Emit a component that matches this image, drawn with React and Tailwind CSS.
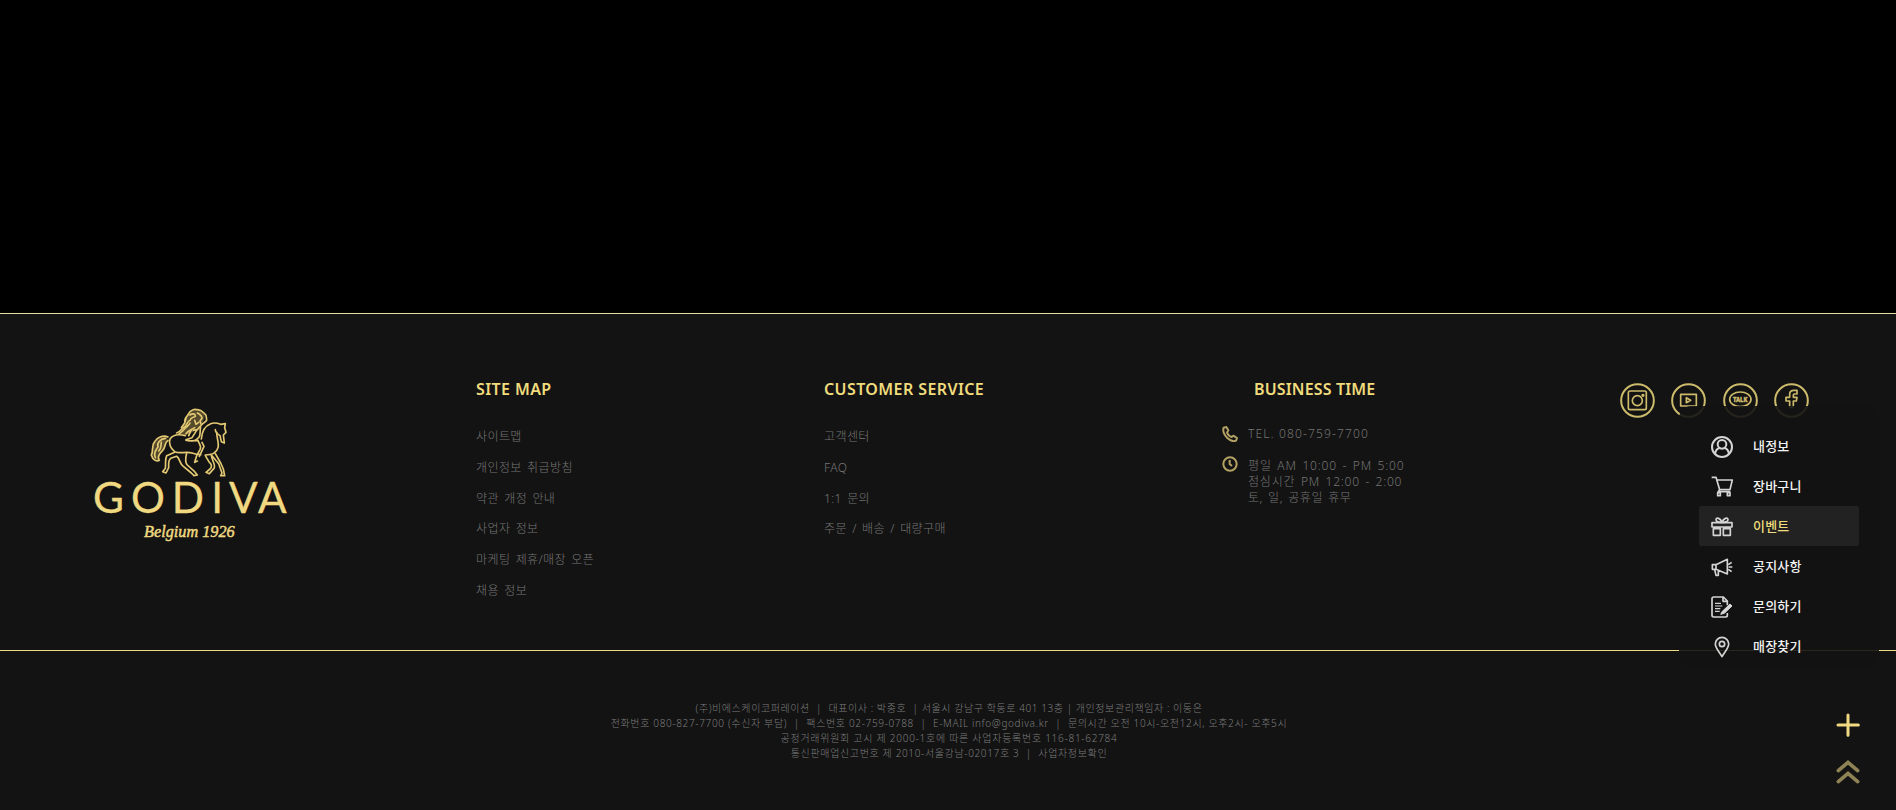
const HEAD = "text-[16px] leading-5 font-semibold text-[#f0dc7d] whitespace-nowrap";

const siteMap = ["사이트맵", "개인정보 취급방침", "약관 개정 안내", "사업자 정보", "마케팅 제휴/매장 오픈", "채용 정보"];
const service = ["고객센터", "FAQ", "1:1 문의", "주문 / 배송 / 대량구매"];

function Logo() {
  return (
    <svg viewBox="0 0 660 480" className="h-[160px] w-[220px]" fill="none" stroke="#e3c973" strokeLinecap="round" strokeLinejoin="round">
      <path d="M312 84C316 62 330 50 344 46C362 42 376 52 374 66C372 80 362 84 356 96L338 112L318 120L292 116C304 106 304 96 312 84Z" fill="#8d7a42" fillOpacity="0.55" stroke="none" />
      <path d="M262 126C246 120 234 126 226 140C214 152 222 166 216 178C220 192 232 198 236 194C230 184 240 174 248 164C256 154 254 144 262 136Z" fill="#8d7a42" fillOpacity="0.55" stroke="none" />
      <g strokeWidth="5">
        <path d="M314 78C314 66 322 66 326 56C332 44 344 42 350 44C362 42 368 50 374 56C382 60 378 68 380 76C376 82 372 82 366 88" />
        <path d="M330 60C338 54 346 56 346 64C340 68 332 66 330 76C320 80 322 90 314 96C306 98 302 110 290 114" />
        <path d="M330 84C326 94 318 96 310 106L298 116M344 98C336 104 328 104 318 116M318 70L314 84L304 98" />
        <path d="M352 54C360 58 366 62 366 70L360 78L364 90L352 104L340 106" />
        <path d="M344 76L348 88L356 82M334 104L326 122" />
        <path d="M362 96C358 108 364 118 356 128L346 136M350 106L336 128L318 134" />
        <path d="M316 122C296 117 278 120 270 132C266 144 270 160 284 170C300 178 316 168 336 174C346 178 354 179 362 179" />
        <path d="M318 136C330 140 344 136 354 136C356 146 366 152 360 164L350 182L344 202L352 198M366 142L372 154L358 184" />
        <path d="M364 132C366 108 376 92 392 86C402 82 412 84 422 88L436 86L434 98L438 112L430 120L433 144L424 140L420 122C408 114 406 110 406 104" />
        <path d="M410 112C410 130 418 146 414 158C410 174 396 180 376 180" />
        <path d="M264 126C250 119 232 126 224 140C212 154 222 166 214 180C218 196 232 200 238 196C230 186 238 176 248 166C258 156 252 144 264 136" />
        <path d="M256 130C240 132 230 144 234 156C226 166 220 176 226 188M244 142C242 150 246 158 236 168" />
        <path d="M284 172L260 182C254 196 258 208 256 220L248 230L258 234L266 218C266 206 264 196 272 190L290 184C300 190 298 206 310 214L334 234L342 242L352 240L344 230L322 210C314 202 316 190 320 174" />
        <path d="M376 182L388 202C396 208 396 216 390 222L378 232L388 236L402 220C408 210 398 202 394 182M396 182L416 206L426 234L422 242L434 242L430 222L422 204L406 176" />
      </g>
      <g fill="#f0d981" stroke="#f0d981">
        <text x="39 153 275 394 447 534" y="355" fontSize="127" fontFamily="'Lato', sans-serif" strokeWidth="1">GODIVA</text>
        <text x="192" y="426" fontSize="51" fontStyle="italic" fontFamily="'Liberation Serif', serif" textLength="272" lengthAdjust="spacingAndGlyphs" strokeWidth="1.5">Belgium 1926</text>
      </g>
    </svg>
  );
}

function Social({ children }) {
  return (
    <svg viewBox="0 0 105 105" className="size-[35px]" fill="none" stroke="#cdbb6c" strokeWidth="6" strokeLinejoin="round">
      <circle cx="52.500" cy="52.500" r="49" />
      {children}
    </svg>
  );
}

const icons = {
  user: (
    <g strokeWidth="6">
      <circle cx="33" cy="33" r="30" /><circle cx="33" cy="25" r="13" />
      <path d="M12 54C14 42 20 37 26 36M54 54C52 42 46 37 40 36" />
    </g>
  ),
  cart: (
    <g strokeWidth="5">
      <path d="M2 4H15L26 41H57L64 12H18" /><path d="M22 47H58M26 41L20 50" />
      <path d="M20 59V50H28V59ZM49 59V50H57V59Z" />
    </g>
  ),
  gift: (
    <g strokeWidth="5">
      <path d="M3 20H63V33H3ZM7 38H28V58H7ZM37 38H58V58H37Z" />
      <path d="M33 19C24 20 15 17 15 11C16 3 28 6 33 19C38 6 50 3 51 11C51 17 42 20 33 19Z" />
    </g>
  ),
  horn: (
    <g strokeWidth="5">
      <path d="M4 26H15V40H4ZM15 26L49 10V54L15 40M11 41L15 58H22V44M52 26L62 19M53 33H64M52 40L62 47" />
    </g>
  ),
  note: (
    <g strokeWidth="5">
      <path d="M49 28V15L37 3H8Q3 3 3 8V58Q3 63 8 63H44Q49 63 49 58V51M36 4V16H48" />
      <path d="M12 22H30M12 30H34M12 38H28M12 46H26" strokeWidth="3.5" />
      <path d="M34 46L57 24L63 30L40 52L29 55Z" fill="#d8d8d8" strokeWidth="3" />
    </g>
  ),
  pin: (
    <g strokeWidth="5">
      <path d="M33 62C27 50 13 37 13 24A20 20 0 0 1 53 24C53 37 39 50 33 62Z" /><circle cx="33" cy="24" r="8" />
    </g>
  ),
};

const menu = [
  { icon: "user", label: "내정보" },
  { icon: "cart", label: "장바구니" },
  { icon: "gift", label: "이벤트", active: true },
  { icon: "horn", label: "공지사항" },
  { icon: "note", label: "문의하기" },
  { icon: "pin", label: "매장찾기" },
];

function LinkColumn({ title, items }) {
  return (
    <div className="pt-[65px]">
      <h2 className={`${HEAD} tracking-[0.4px]`}>{title}</h2>
      <ul className="mt-[22px] text-[12px] font-light tracking-[0.4px] text-[#757575] [word-spacing:1.8px]">
        {items.map((label) => (
          <li key={label} className="h-[30.8px] leading-[31px] whitespace-nowrap">{label}</li>
        ))}
      </ul>
    </div>
  );
}

export default function App() {
  return (
    <div className="relative h-[810px] w-full overflow-hidden bg-black font-['Noto_Sans','Noto_Sans_CJK_KR',sans-serif]">
      <div className="h-[313px]" />
      <footer className="h-[497px] border-t border-[#e6da9f] bg-[#131313]">
        <div className="grid h-[337px] grid-cols-[476px_348px_398px_397.500px_1fr] border-b border-[#eddb84]">
          <div className="pt-[81px] pl-20"><Logo /></div>
          <LinkColumn title="SITE MAP" items={siteMap} />
          <LinkColumn title="CUSTOMER SERVICE" items={service} />
          <div className="pt-[65px]">
            <h2 className={`${HEAD} pl-8 tracking-[0.15px]`}>BUSINESS TIME</h2>
            <div className="mt-[26px] flex gap-[10px] text-[12px] leading-4 font-light text-[#757575]">
              <svg viewBox="0 0 48 48" className="mt-[1px] size-4" fill="none" stroke="#b3a263" strokeWidth="6" strokeLinejoin="round">
                <path d="M5 5L13 3L19 13L15 20C18 27 24 32 29 33L34 29L45 36L42 44C36 47 25 44 16 36C6 26 2 14 5 5Z" />
              </svg>
              <span className="mt-px whitespace-nowrap tracking-[1.150px]">TEL. 080-759-7700</span>
            </div>
            <div className="mt-[14px] flex gap-[10px] text-[12px] leading-4 font-light text-[#757575]">
              <svg viewBox="0 0 48 48" className="size-4" fill="none" stroke="#b3a263" strokeWidth="6">
                <circle cx="24" cy="24" r="20" /><path d="M23 12V24L30 30" />
              </svg>
              <div className="mt-[2px] whitespace-nowrap [word-spacing:1.6px]">
                <p className="tracking-[0.85px]">평일 AM 10:00 - PM 5:00</p>
                <p className="tracking-[0.8px]">점심시간 PM 12:00 - 2:00</p>
                <p className="tracking-[0.55px]">토, 일, 공휴일 휴무</p>
              </div>
            </div>
          </div>
          <div className="flex gap-[16.500px] pt-[69px]">
            <Social>
              <g strokeWidth="5"><rect x="25" y="24" width="54" height="56" rx="5" /><circle cx="52" cy="53" r="15" /><circle cx="69" cy="37" r="2.500" /></g>
            </Social>
            <Social><path d="M29 34H76V69H29ZM46 44V59L59 52Z" strokeWidth="5" /></Social>
            <Social>
              <g>
                <ellipse cx="52" cy="49" rx="32" ry="22" strokeWidth="5" />
                <text x="30" y="57" fontSize="21" fontWeight="700" fill="#cdbb6c" strokeWidth="1.500" textLength="43" lengthAdjust="spacingAndGlyphs">TALK</text>
              </g>
            </Social>
            <Social><path d="M47 73V54H36V43H47V33Q47 22 60 22H69V33H61Q58 33 58 37V43H69L67 54H58V73Z" strokeWidth="5" /></Social>
          </div>
        </div>
        <div className="pt-[50px] pl-[2px] text-center text-[10px] leading-[15px] font-light whitespace-pre text-[#7c7c7c]">
          <p className="tracking-[0.57px]">{"(주)비에스케이코퍼레이션  |  대표이사 : 박종호  | 서울시 강남구 학동로 401 13층 | 개인정보관리책임자 : 이동은"}</p>
          <p className="tracking-[0.65px]">{"전화번호 080-827-7700 (수신자 부담)  |  팩스번호 02-759-0788  |  E-MAIL info@godiva.kr  |  문의시간 오전 10시-오전12시, 오후2시- 오후5시"}</p>
          <p className="tracking-[0.73px]">공정거래위원회 고시 제 2000-1호에 따른 사업자등록번호 116-81-62784</p>
          <p className="tracking-[0.64px]">{"통신판매업신고번호 제 2010-서울강남-02017호 3  |  사업자정보확인"}</p>
        </div>
      </footer>

      <nav className="absolute top-[406px] left-[1679px] h-[260px] w-[200px] rounded-[12px] bg-[#131313]/90 px-5 pt-5">
        {menu.map((m) => (
          <a key={m.label} className={`flex h-10 items-center gap-5 rounded-[2px] pt-[1px] pl-3 text-[13px] font-medium tracking-[0.2px] whitespace-nowrap ${m.active ? "bg-[#222222] text-[#f0dc7d]" : "text-[#f2f2f2]"}`}>
            <svg viewBox="0 0 66 66" className="size-[22px]" fill="none" stroke="#d4d4d4" strokeLinejoin="round">{icons[m.icon]}</svg>
            {m.label}
          </a>
        ))}
      </nav>
      <div className="absolute top-[713px] left-[1835.500px] flex flex-col gap-[21px]">
        <svg viewBox="0 0 72 72" className="size-6" stroke="#f0d981" strokeWidth="9" strokeLinecap="round"><path d="M36 6V67M6 36H67" /></svg>
        <svg viewBox="0 0 72 78" className="h-[26px] w-6" fill="none" stroke="#8f8355" strokeWidth="11" strokeLinecap="round"><path d="M7 38L36 13L65 38M7 71L36 46L65 71" /></svg>
      </div>
    </div>
  );
}
